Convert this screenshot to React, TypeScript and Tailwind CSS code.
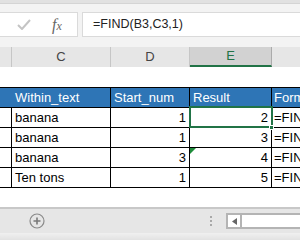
import React from "react";

const font = { fontFamily: '"Liberation Sans", Arial, sans-serif' };

function Row({ c, d, e }: { c: string; d: string; e: string }) {
  return (
    <div className="flex h-[20px] border-b border-black">
      <div className="w-[12px] border-r border-black" />
      <div className="w-[99px] border-r border-black pl-[3px] text-[13px] leading-[19px] text-black">{c}</div>
      <div className="w-[79px] border-r border-black pr-[3px] text-right text-[13px] leading-[19px] text-black">{d}</div>
      <div className="w-[82px] border-r border-black pr-[3px] text-right text-[13px] leading-[19px] text-black">{e}</div>
      <div className="flex-1 pl-[2px] text-[13px] leading-[19px] text-black whitespace-nowrap overflow-hidden">=FIND(B3,C3,1)</div>
    </div>
  );
}

export default function App() {
  return (
    <div className="relative w-[300px] h-[240px] overflow-hidden bg-white" style={font}>
      {/* formula bar */}
      <div className="h-[4px] bg-[#e1e1e1] border-b border-[#d4d4d4]" />
      <div className="h-[43px] bg-[#f3f3f3] pt-[8px] flex">
        <div className="w-[78px] h-[25px] bg-white border border-[#dadada] border-l-0 flex items-center">
          <svg width="14" height="11" viewBox="0 0 14 11" className="ml-[17px]">
            <path d="M1 6 L5 10 L13 1" stroke="#c4c4c4" strokeWidth="2" fill="none" />
          </svg>
          <span className="ml-[21px] text-[16px] italic text-[#666]" style={{ fontFamily: '"Liberation Serif", serif' }}>
            f<span className="text-[12px]">x</span>
          </span>
        </div>
        <div className="ml-[4px] flex-1 h-[25px] bg-white border border-[#dadada] border-r-0 pl-[10px] text-[12.5px] leading-[23px] text-[#222]">
          =FIND(B3,C3,1)
        </div>
      </div>
      {/* column headers */}
      <div className="flex h-[20px] bg-[#e6e6e6] text-[13px] text-[#444]">
        <div className="w-[12px] border-r border-[#c6c6c6]" />
        <div className="w-[99px] border-r border-[#c6c6c6] text-center leading-[20px]">C</div>
        <div className="w-[79px] border-r border-[#c6c6c6] text-center leading-[20px]">D</div>
        <div className="w-[82px] border-r border-[#ababab] bg-[#d2d2d2] border-b-2 border-b-[#217346] text-center leading-[18px] text-[#217346]">E</div>
        <div className="flex-1" />
      </div>
      {/* empty row 2 */}
      <div className="h-[20px]" />
      {/* table header */}
      <div className="flex h-[21px] bg-[#2e75b6] border-y border-black text-white text-[13px] leading-[19px]">
        <div className="w-[12px] border-r border-[#2e75b6]" />
        <div className="w-[99px] border-r border-black pl-[3px]">Within_text</div>
        <div className="w-[79px] border-r border-black pl-[3px] whitespace-nowrap">Start_num</div>
        <div className="w-[82px] border-r border-black pl-[3px]">Result</div>
        <div className="flex-1 pl-[2px] whitespace-nowrap overflow-hidden">Formula</div>
      </div>
      <Row c="banana" d="1" e="2" />
      <Row c="banana" d="1" e="3" />
      <Row c="banana" d="3" e="4" />
      <Row c="Ten tons" d="1" e="5" />
      {/* selection */}
      <div className="absolute left-[189px] top-[106px] w-[84px] h-[22px] border-2 border-[#217346]" />
      <div className="absolute left-[269px] top-[125px] w-[5px] h-[5px] bg-[#217346] border border-white" />
      {/* error triangle */}
      <svg className="absolute left-[190px] top-[148px]" width="6" height="6" viewBox="0 0 6 6">
        <path d="M0 0 L6 0 L0 6 Z" fill="#1e8c3a" />
      </svg>
      {/* bottom bar */}
      <div className="h-[19px]" />
      <div className="h-[26px] bg-[#e6e6e6] border-t-2 border-[#c8c8c8] flex items-center">
        <svg width="16" height="16" viewBox="0 0 16 16" className="ml-[29px]">
          <circle cx="8" cy="8" r="7" stroke="#8a8a8a" strokeWidth="1.2" fill="none" />
          <path d="M8 4.5 V11.5 M4.5 8 H11.5" stroke="#7a7a7a" strokeWidth="1.6" />
        </svg>
        <div className="ml-[165px] flex flex-col gap-[2px]">
          <div className="w-[2px] h-[2px] bg-[#a8a8a8]" />
          <div className="w-[2px] h-[2px] bg-[#a8a8a8]" />
          <div className="w-[2px] h-[2px] bg-[#a8a8a8]" />
        </div>
        <div className="ml-[14px] flex-1 h-[16px] bg-white border-2 border-[#b4b4b4] border-r-0 flex">
          <div className="w-[14px] border-r-2 border-[#b4b4b4] flex items-center justify-center">
            <svg width="5" height="7" viewBox="0 0 5 7">
              <path d="M5 0 L0 3.5 L5 7 Z" fill="#666" />
            </svg>
          </div>
        </div>
      </div>
      <div className="h-[8px] bg-gradient-to-b from-[#f0f0f0] to-[#e0e0e0]" />
    </div>
  );
}
